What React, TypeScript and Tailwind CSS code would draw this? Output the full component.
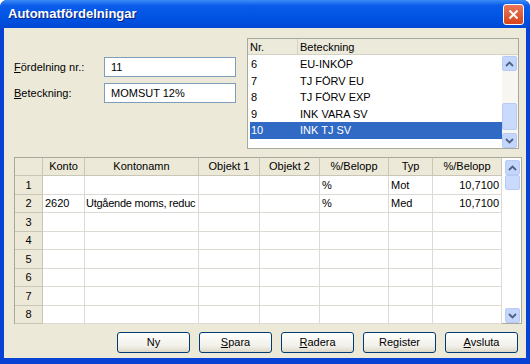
import React from "react";

const font = { fontFamily: '"Liberation Sans", Arial, sans-serif' };

const listRows = [
  { nr: "6", name: "EU-INKÖP" },
  { nr: "7", name: "TJ FÖRV EU" },
  { nr: "8", name: "TJ FÖRV EXP" },
  { nr: "9", name: "INK VARA SV" },
  { nr: "10", name: "INK TJ SV", selected: true },
];

const cols = [
  { label: "Konto", w: "w-[42px]" },
  { label: "Kontonamn", w: "w-[114px]" },
  { label: "Objekt 1", w: "w-[61px]" },
  { label: "Objekt 2", w: "w-[60px]" },
  { label: "%/Belopp", w: "w-[69px]" },
  { label: "Typ", w: "w-[44px]" },
  { label: "%/Belopp", w: "w-[69px]" },
];

const gridRows: string[][] = [
  ["", "", "", "", "%", "Mot", "10,7100"],
  ["2620", "Utgående moms, reduc", "", "", "%", "Med", "10,7100"],
  ["", "", "", "", "", "", ""],
  ["", "", "", "", "", "", ""],
  ["", "", "", "", "", "", ""],
  ["", "", "", "", "", "", ""],
  ["", "", "", "", "", "", ""],
  ["", "", "", "", "", "", ""],
];

function Arrow({ up }: { up?: boolean }) {
  return (
    <svg width="9" height="6" viewBox="0 0 9 6">
      <path
        d={up ? "M1 5 L4.5 1.5 L8 5" : "M1 1 L4.5 4.5 L8 1"}
        fill="none"
        stroke="#4d6185"
        strokeWidth="1.8"
      />
    </svg>
  );
}

function ScrollBtn({ up }: { up?: boolean }) {
  return (
    <div className="flex h-[15px] w-[15px] items-center justify-center rounded-[2px] border border-[#b7cbf5] bg-[#c4d6fb]">
      <Arrow up={up} />
    </div>
  );
}

function Btn({ label, u }: { label: string; u?: number }) {
  return (
    <div className="flex h-[21px] w-[73px] items-center justify-center rounded-[3px] border border-[#003c74] bg-[linear-gradient(#ffffff,#f0efe8_70%,#dcd8c8)] text-[11px] text-black">
      {u === undefined ? (
        label
      ) : (
        <span>
          {label.slice(0, u)}
          <span className="underline">{label[u]}</span>
          {label.slice(u + 1)}
        </span>
      )}
    </div>
  );
}

export default function App() {
  return (
    <div
      style={font}
      className="flex h-[364px] w-[530px] flex-col overflow-hidden rounded-t-[7px] bg-[#0842d4] text-[11px] text-black"
    >
      {/* title bar */}
      <div className="flex h-[28px] shrink-0 items-center justify-between bg-[linear-gradient(#3b8cf7,#0a5ce9_20%,#0054e3_60%,#0048d4)] pl-[8px] pr-[6px]">
        <span className="text-[13px] font-bold text-white [text-shadow:1px_1px_#0a1f80]">
          Automatfördelningar
        </span>
        <div className="flex h-[21px] w-[21px] items-center justify-center rounded-[3px] border border-white bg-[linear-gradient(#e8775a,#d8431a)]">
          <svg width="11" height="11" viewBox="0 0 11 11">
            <path d="M1.5 1.5 L9.5 9.5 M9.5 1.5 L1.5 9.5" stroke="white" strokeWidth="2" />
          </svg>
        </div>
      </div>

      {/* body */}
      <div className="mx-[4px] mb-[6px] flex flex-1 flex-col bg-[#ece9d8]">
        <div className="flex pt-[10px]">
          {/* form */}
          <div className="flex w-[243px] flex-col gap-[6px] pl-[10px] pt-[19px]">
            <div className="flex items-center">
              <span className="w-[90px]">
                <span className="underline">F</span>ördelning nr.:
              </span>
              <div className="flex h-[20px] w-[132px] items-center border border-[#7f9db9] bg-white px-[6px]">
                11
              </div>
            </div>
            <div className="flex items-center">
              <span className="w-[90px]">
                <span className="underline">B</span>eteckning:
              </span>
              <div className="flex h-[20px] w-[132px] items-center border border-[#7f9db9] bg-white px-[6px]">
                MOMSUT 12%
              </div>
            </div>
          </div>

          {/* list */}
          <div className="flex h-[111px] w-[272px] flex-col border border-[#a5a99e] bg-white">
            <div className="flex h-[16px] shrink-0 border-b border-[#d5d2c5] bg-[#ebeadb]">
              <div className="w-[50px] border-r border-[#d5d2c5] pl-[2px] leading-[16px]">Nr.</div>
              <div className="pl-[2px] leading-[16px]">Beteckning</div>
            </div>
            <div className="flex flex-1">
              <div className="flex flex-1 flex-col pl-[2px] pt-[1px]">
                {listRows.map((r) => (
                  <div
                    key={r.nr}
                    className={`flex h-[16.5px] items-center ${r.selected ? "bg-[#316ac5] text-white" : ""}`}
                  >
                    <div className="w-[48px] pl-[1px]">{r.nr}</div>
                    <div className="pl-[2px]">{r.name}</div>
                  </div>
                ))}
              </div>
              <div className="flex w-[16px] flex-col bg-[#f7f6f1] pt-[1px]">
                <ScrollBtn up />
                <div className="flex-1" />
                <div className="h-[27px] w-[15px] rounded-[2px] border border-[#b7cbf5] bg-[#c9dafc]" />
                <div className="h-[3px]" />
                <ScrollBtn />
              </div>
            </div>
          </div>
        </div>

        {/* grid */}
        <div className="ml-[10px] mt-[8px] flex h-[167px] w-[508px] border border-[#a5a99e] bg-white">
          <div className="flex flex-col">
            <div className="flex h-[18px] shrink-0">
              <div className="w-[28px] border-b border-r border-[#c9c6b8] bg-[#ece9d8]" />
              {cols.map((c, i) => (
                <div
                  key={i}
                  className={`${c.w} flex items-center justify-center border-b border-r border-[#c9c6b8] bg-[#ece9d8]`}
                >
                  {c.label}
                </div>
              ))}
            </div>
            {gridRows.map((row, ri) => (
              <div key={ri} className="flex h-[18.5px] shrink-0">
                <div className="flex w-[28px] items-center justify-center border-b border-r border-[#c9c6b8] bg-[#ece9d8]">
                  {ri + 1}
                </div>
                {row.map((v, ci) => (
                  <div
                    key={ci}
                    className={`${cols[ci].w} flex items-center overflow-hidden whitespace-nowrap border-b border-r border-[#dcdad2] ${ci === 1 ? "pl-[1px] tracking-[-0.25px]" : "px-[2px]"} ${ci === 6 ? "justify-end" : ""}`}
                  >
                    {v}
                  </div>
                ))}
              </div>
            ))}
          </div>
          <div className="flex-1" />
          <div className="mr-[1px] flex w-[15px] flex-col pt-[2px]">
            <ScrollBtn up />
            <div className="h-[15px] w-[15px] rounded-[2px] border border-[#b7cbf5] bg-[#c9dafc]" />
            <div className="flex-1" />
            <ScrollBtn />
          </div>
        </div>

        {/* buttons */}
        <div className="mt-[8px] flex gap-[9px] pl-[113px]">
          <Btn label="Ny" />
          <Btn label="Spara" u={0} />
          <Btn label="Radera" u={0} />
          <Btn label="Register" />
          <Btn label="Avsluta" u={0} />
        </div>
      </div>
    </div>
  );
}
